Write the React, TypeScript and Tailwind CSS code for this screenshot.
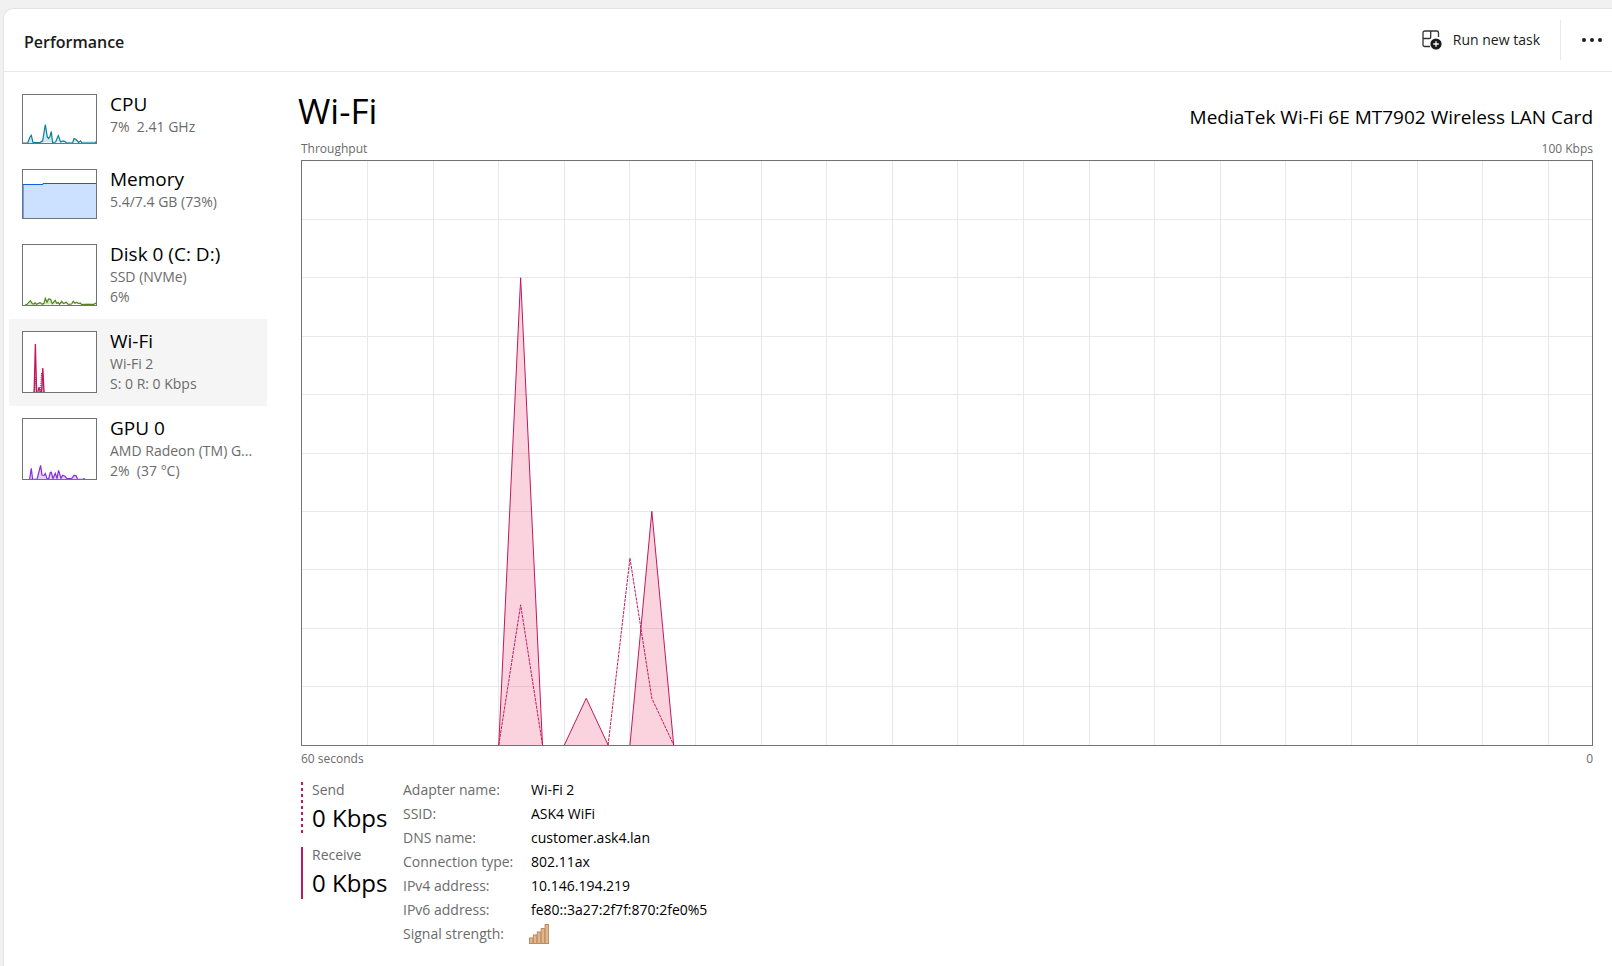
import type { ReactNode } from 'react';

type Point = [number, number];

const RECEIVE: Point[][] = [
  [[9, 0], [10, 80], [11, 0]],
  [[12, 0], [13, 8], [14, 0]],
  [[15, 0], [16, 40], [17, 0]],
];
const SEND: Point[][] = [
  [[9, 0], [10, 24], [11, 0]],
  [[14, 0], [15, 32], [16, 8], [17, 0]],
];

const toPoints = (line: Point[]) => line.map(([x, y]) => `${x},${100 - y}`).join(' ');

function NetworkLines({ small = false }: { small?: boolean }) {
  return (
    <>
      {RECEIVE.map((line, i) => (
        <polyline key={i} points={toPoints(line)} fill="#e8376f" fillOpacity={small ? 0.35 : 0.22} stroke="#c2185b" strokeWidth={small ? 1.3 : 1} vectorEffect="non-scaling-stroke" />
      ))}
      {SEND.map((line, i) => (
        <polyline key={i} points={toPoints(line)} fill="none" stroke="#c2185b" strokeWidth="1" strokeDasharray={small ? '1 1' : '3 1'} vectorEffect="non-scaling-stroke" />
      ))}
    </>
  );
}

function ThroughputChart() {
  return (
    <svg viewBox="0 0 59 100" preserveAspectRatio="none" role="img" aria-label="Throughput over 60 seconds" className="block h-0 min-h-80 w-full grow border border-[#737373]">
      <g stroke="#e8e8e8" strokeWidth="1" shapeRendering="crispEdges">
        {Array.from({ length: 19 }, (_, i) => (
          <line key={i} x1={(i + 1) * 3} x2={(i + 1) * 3} y1="0" y2="100" vectorEffect="non-scaling-stroke" />
        ))}
        {Array.from({ length: 9 }, (_, i) => (
          <line key={i} x1="0" x2="59" y1={(i + 1) * 10} y2={(i + 1) * 10} vectorEffect="non-scaling-stroke" />
        ))}
      </g>
      <NetworkLines />
    </svg>
  );
}

const CPU = '0,49 5.6,49 8,43 9.3,41.3 11,48.5 18,48.3 20.6,47 23.3,30.5 25.3,43 26.6,44.5 28,42.5 29.3,37.5 30.6,48.5 33.6,48 36.3,41.6 38.6,48 41,47 43,47.6 44.6,49 50.6,49 52,44.5 54,45.5 56.6,48.5 58.6,46.8 60,49 73.6,49 74.5,47';
const DISK = '3,61 5,60.3 8.3,56.7 10.3,59.6 12,60 13,58.6 14.5,60.3 18,58.6 20.3,60.3 22,59.3 23.3,54.3 25,58.3 26.6,55 28.6,55.3 30.3,59.6 33.3,56.3 34.6,59.3 36.3,58.6 37.6,60.3 39.6,57.3 41.6,59.6 44.3,58.3 46.3,60.3 49.6,60 51.3,57.3 53,59.3 54.6,58.3 56.6,59.6 58.3,59 59.6,60.6 65.6,60.3 71.6,60.6 74,59';
const GPU = '7.6,61.3 9.3,50.3 10.6,61.3 15,61.3 18.6,47.3 20,57 22,57.3 23.3,55.6 25,60.6 26.6,61 28.3,54.6 29.3,54.3 31,60.6 33.3,55.3 35,60.3 36.6,52.3 39,60.3 40.6,57.3 43,58.3 45,60.6 49.6,60.6 52,57.3 54,57.6 55.6,61.3 61,61 62,60.6 63,61.3';

function Thumb({ tall = false, children }: { tall?: boolean; children: ReactNode }) {
  return (
    <span className={`block w-[75px] shrink-0 border border-[#737373] bg-white ${tall ? 'h-[62px]' : 'h-[50px]'}`}>
      {children}
    </span>
  );
}

interface Device {
  name: string;
  lines: string[];
  thumb: ReactNode;
  active?: boolean;
}

const DEVICES: Device[] = [
  {
    name: 'CPU',
    lines: ['7%  2.41 GHz'],
    thumb: (
      <Thumb>
        <svg viewBox="1 1 73 48" aria-hidden="true" className="block size-full">
          <polyline points={CPU} fill="#c5ecfa" stroke="#117d9b" strokeWidth="1.2" />
        </svg>
      </Thumb>
    ),
  },
  {
    name: 'Memory',
    lines: ['5.4/7.4 GB (73%)'],
    thumb: (
      <Thumb>
        <svg viewBox="1 1 73 48" aria-hidden="true" className="block size-full">
          <path d="M1 50V15.5H21V14.5H75V50" fill="#cce0ff" stroke="#0b62d9" strokeWidth="1" />
        </svg>
      </Thumb>
    ),
  },
  {
    name: 'Disk 0 (C: D:)',
    lines: ['SSD (NVMe)', '6%'],
    thumb: (
      <Thumb tall>
        <svg viewBox="1 1 73 60" aria-hidden="true" className="block size-full">
          <polyline points={DISK} fill="#d3eec0" stroke="#56851b" strokeWidth="1.2" />
        </svg>
      </Thumb>
    ),
  },
  {
    name: 'Wi-Fi',
    lines: ['Wi-Fi 2', 'S: 0 R: 0 Kbps'],
    active: true,
    thumb: (
      <Thumb tall>
        <svg viewBox="0 0 59 100" preserveAspectRatio="none" aria-hidden="true" className="block size-full">
          <NetworkLines small />
        </svg>
      </Thumb>
    ),
  },
  {
    name: 'GPU 0',
    lines: ['AMD Radeon (TM) G...', '2%  (37 °C)'],
    thumb: (
      <Thumb tall>
        <svg viewBox="1 1 73 60" aria-hidden="true" className="block size-full">
          <polyline points={GPU} fill="#e3d3fb" stroke="#8a2be2" strokeWidth="1.2" />
        </svg>
      </Thumb>
    ),
  },
];

function DeviceButton({ name, lines, thumb, active }: Device) {
  return (
    <button type="button" aria-pressed={!!active} className={`flex w-full items-start gap-[13px] pb-[13px] pl-[13px] pt-3 text-left ${active ? 'bg-[#f5f5f5]' : ''}`}>
      {thumb}
      <span className="-mb-1 -mt-[3px] flex min-w-0 flex-col whitespace-pre text-sm leading-5 text-[#6b6b6b]">
        <span className="text-[19px] leading-[26px] text-black">{name}</span>
        {lines.map((line) => (
          <span key={line}>{line}</span>
        ))}
      </span>
    </button>
  );
}

function RunTaskIcon() {
  return (
    <svg viewBox="0 0 20 20" width="20" height="20" fill="none" aria-hidden="true">
      <path d="M8 16.5H2.8A1.8 1.8 0 0 1 1 14.7V2.8A1.8 1.8 0 0 1 2.8 1H14.7A1.8 1.8 0 0 1 16.5 2.8V7M1 8.5H7.4A1.3 1.3 0 0 0 8.7 7.2V1" stroke="#333" strokeWidth="1.3" />
      <circle cx="14" cy="14" r="5.6" fill="#1b1b1b" />
      <path d="M14 11.2V16.8M11.2 14H16.8" stroke="#fff" strokeWidth="1.3" />
    </svg>
  );
}

function SignalIcon() {
  return (
    <svg viewBox="0 0 20 20" width="20" height="20" role="img" aria-label="Signal strength: full" className="-ml-0.5">
      {[14, 11, 8, 4.5, 0.5].map((y, i) => (
        <rect key={y} x={0.5 + i * 3.9} y={y} width="3.5" height={19.5 - y} fill="#dfb592" stroke="#c08a5c" strokeWidth="1" />
      ))}
    </svg>
  );
}

function Meter({ label, value, dashed = false }: { label: string; value: string; dashed?: boolean }) {
  return (
    <div className="flex h-[52px] gap-[9px]">
      <svg width="2" height="52" aria-hidden="true">
        <line x1="1" x2="1" y1="0" y2="52" stroke="#c2185b" strokeWidth="2" strokeDasharray={dashed ? '3 3' : undefined} />
      </svg>
      <div>
        <div className="text-sm leading-4 text-[#6b6b6b]">{label}</div>
        <div className="whitespace-nowrap pt-1 text-2xl leading-8 text-black">{value}</div>
      </div>
    </div>
  );
}

const DETAILS: [string, ReactNode][] = [
  ['Adapter name:', 'Wi-Fi 2'],
  ['SSID:', 'ASK4 WiFi'],
  ['DNS name:', 'customer.ask4.lan'],
  ['Connection type:', '802.11ax'],
  ['IPv4 address:', '10.146.194.219'],
  ['IPv6 address:', 'fe80::3a27:2f7f:870:2fe0%5'],
  ['Signal strength:', <SignalIcon />],
];

export default function App() {
  return (
    <div className="flex min-h-screen flex-col bg-[#f1f1f1] pl-[3px] pt-2 font-['Open_Sans','Noto_Sans',sans-serif] text-black">
      <div className="flex grow flex-col rounded-tl-[10px] border-l border-t border-[#e3e3e3] bg-white">
        <header className="flex h-[63px] items-center justify-between border-b border-[#e8e8e8] pl-5">
          <h1 className="pt-1 text-base font-semibold text-[#1b1b1b]">Performance</h1>
          <div className="flex items-center">
            <button type="button" className="flex items-center gap-[11px] pr-5 text-sm text-[#1b1b1b]">
              <RunTaskIcon />
              Run new task
            </button>
            <div className="h-10 w-px bg-[#e8e8e8]" />
            <button type="button" aria-label="More options" className="py-2 pl-5 pr-[9px]">
              <svg viewBox="0 0 22 6" width="22" height="6" fill="#1b1b1b" aria-hidden="true">
                <circle cx="3" cy="3" r="2" />
                <circle cx="11" cy="3" r="2" />
                <circle cx="19" cy="3" r="2" />
              </svg>
            </button>
          </div>
        </header>

        <div className="flex grow">
          <nav aria-label="Devices" className="w-[263px] shrink-0 pl-[5px] pt-2.5">
            {DEVICES.map((device) => (
              <DeviceButton key={device.name} {...device} />
            ))}
          </nav>

          <main className="flex min-w-0 grow flex-col pb-5 pl-[34px] pr-[19px] pt-4">
            <div className="flex items-end justify-between">
              <h2 className="-ml-[3px] text-[35px] leading-[46px]">Wi-Fi</h2>
              <p className="pb-[3px] text-[19px] leading-7">MediaTek Wi-Fi 6E MT7902 Wireless LAN Card</p>
            </div>
            <div className="flex justify-between pb-[3px] pt-[7px] text-xs leading-4 text-[#6b6b6b]">
              <span>Throughput</span>
              <span>100 Kbps</span>
            </div>
            <ThroughputChart />
            <div className="flex justify-between pt-[3px] text-xs leading-5 text-[#6b6b6b]">
              <span>60 seconds</span>
              <span>0</span>
            </div>
            <div className="flex pt-[13px]">
              <div className="flex w-[102px] flex-col gap-[13px]">
                <Meter label="Send" value="0 Kbps" dashed />
                <Meter label="Receive" value="0 Kbps" />
              </div>
              <dl className="-mt-1 grid grid-cols-[128px_auto] text-sm leading-6">
                {DETAILS.map(([label, value]) => (
                  <div key={label} className="col-span-2 grid h-6 grid-cols-subgrid items-center">
                    <dt className="text-[#6b6b6b]">{label}</dt>
                    <dd>{value}</dd>
                  </div>
                ))}
              </dl>
            </div>
          </main>
        </div>
      </div>
    </div>
  );
}
